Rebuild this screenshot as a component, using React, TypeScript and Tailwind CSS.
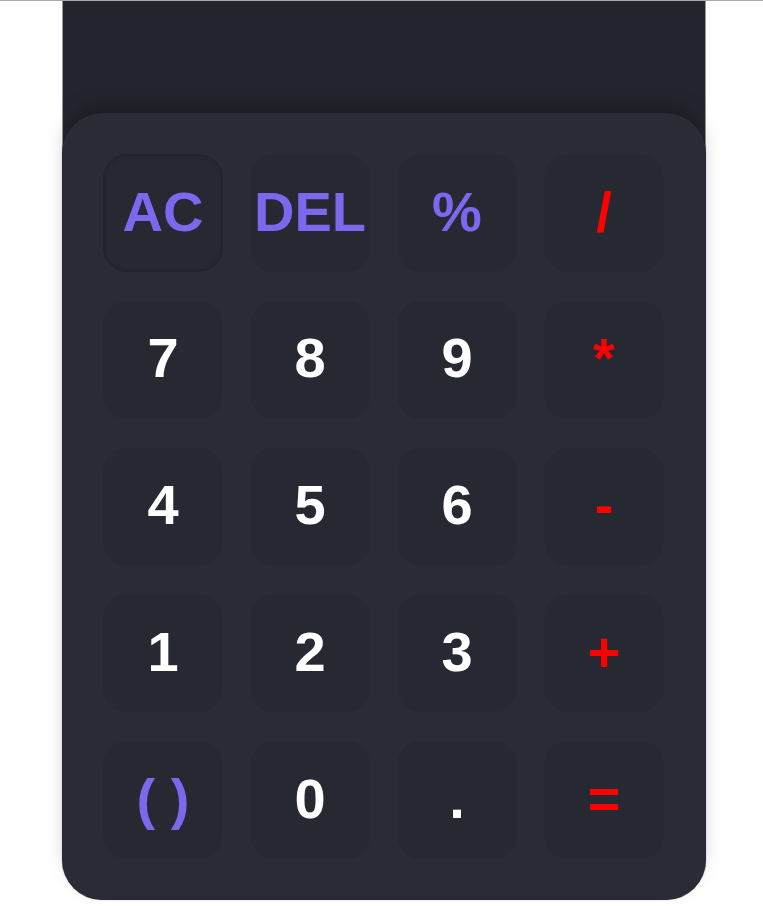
const keys = [
  { label: "AC", kind: "fn", active: true },
  { label: "DEL", kind: "fn" },
  { label: "%", kind: "fn" },
  { label: "/", kind: "op" },
  { label: "7", kind: "num" },
  { label: "8", kind: "num" },
  { label: "9", kind: "num" },
  { label: "*", kind: "op" },
  { label: "4", kind: "num" },
  { label: "5", kind: "num" },
  { label: "6", kind: "num" },
  { label: "-", kind: "op" },
  { label: "1", kind: "num" },
  { label: "2", kind: "num" },
  { label: "3", kind: "num" },
  { label: "+", kind: "op" },
  { label: "( )", kind: "fn" },
  { label: "0", kind: "num" },
  { label: ".", kind: "num" },
  { label: "=", kind: "op" },
];

const colorFor = (kind: string) => {
  if (kind === "fn") return "text-[#7b68ee]";
  if (kind === "op") return "text-[#ff0000]";
  return "text-white";
};

const App = () => {
  // main render
  return (
    <div className="min-h-screen w-full bg-white border-t border-[#a9a9a9] font-['Liberation_Sans',Arial,sans-serif]">
      <div className="ml-[62px] w-[644px]">
        {/* display */}
        <div className="h-[356px] bg-[#22252d] border-x border-[#9a9a9a]" />

        {/* keypad */}
        <div className="relative -mt-[244px] bg-[#292c35] rounded-[40px] pl-[41px] pr-[42px] py-[41px] shadow-[0_-10px_22px_-8px_rgba(0,0,0,0.35),0_0_1px_rgba(0,0,0,0.5)]">
          <div className="grid grid-cols-[repeat(4,120px)] auto-rows-[118px] gap-x-[27px] gap-y-[28.75px]">
            {keys.map((k) => (
              <button
                type="button"
                key={k.label}
                className={`flex items-center justify-center rounded-[24px] bg-[#272932] text-[56px] font-bold leading-none pb-[3px] cursor-pointer ${colorFor(k.kind)} ${
                  k.active ? "border border-[#23252d] shadow-[inset_0_0_4px_rgba(0,0,0,0.2)]" : ""
                }`}
              >
                {k.label}
              </button>
            ))}
          </div>
        </div>
      </div>
    </div>
  );
};

export default App;
